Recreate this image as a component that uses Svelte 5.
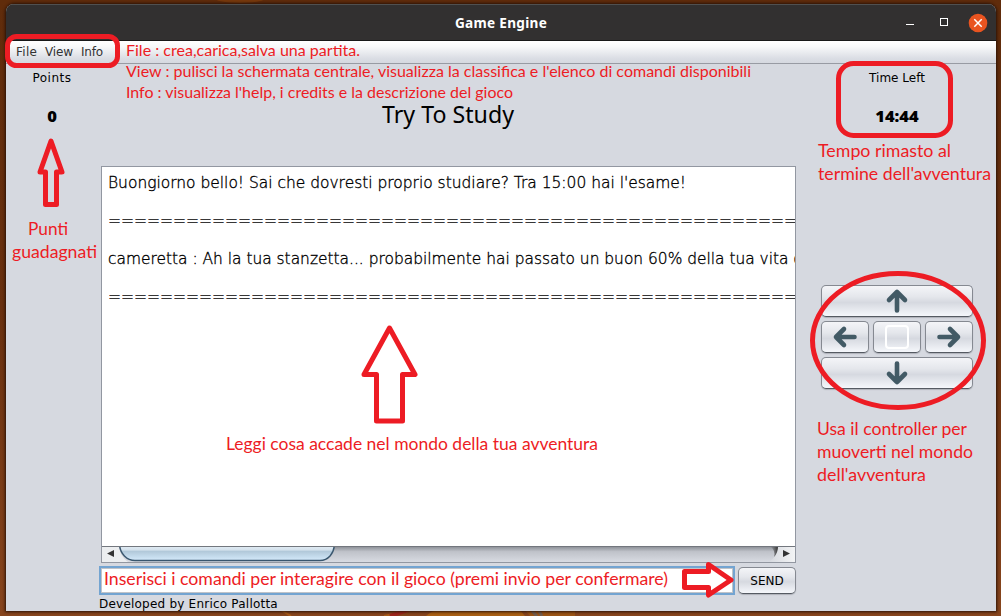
<script>
  const menus = [['File', 22], ['View', 29], ['Info', 23]];
  const rule = '='.repeat(70);
  const lines = [
    { text: "Buongiorno bello! Sai che dovresti proprio studiare? Tra 15:00 hai l'esame!", w: 578 },
    { text: rule, w: 910 },
    { text: 'cameretta : Ah la tua stanzetta... probabilmente hai passato un buon 60% della tua vita chiuso qui', w: 764 },
    { text: rule, w: 910 }
  ];
  const notes = [
    { x: 126, y: 56, w: 234, s: 16, t: 'File : crea,carica,salva una partita.' },
    { x: 126, y: 77, w: 625, s: 16, t: "View : pulisci la schermata centrale, visualizza la classifica e l'elenco di comandi disponibili" },
    { x: 126, y: 98, w: 387, s: 16, t: "Info : visualizza l'help, i credits e la descrizione del gioco" },
    { x: 818, y: 157, w: 133, s: 17.5, t: 'Tempo rimasto al' },
    { x: 818, y: 180, w: 173, s: 17.5, t: "termine dell'avventura" },
    { x: 28, y: 235, w: 40, s: 17.5, t: 'Punti' },
    { x: 12, y: 258, w: 85, s: 17.5, t: 'guadagnati' },
    { x: 226, y: 450, w: 372, s: 17.5, t: 'Leggi cosa accade nel mondo della tua avventura' },
    { x: 817, y: 435, w: 150, s: 17.5, t: 'Usa il controller per' },
    { x: 817, y: 458, w: 156, s: 17.5, t: 'muoverti nel mondo' },
    { x: 817, y: 481, w: 109, s: 17.5, t: "dell'avventura" },
    { x: 104, y: 585, w: 564, s: 17.5, t: 'Inserisci i comandi per interagire con il gioco (premi invio per confermare)' }
  ];
</script>

{#snippet arrow(turn)}
  <svg class="arrow" width="26" height="26" viewBox="-13 -13 26 26">
    <path transform={`rotate(${turn})`} d="M0 9.500V-9M-8 -1L0 -9L8 -1" />
  </svg>
{/snippet}

<div class="desktop">
  <svg class="wallpaper" width="1001" height="616">
    <ellipse cx="240" cy="-3" rx="27" ry="6" fill="#783a0d" />
    <path d="M281 610l10 6M384 616l24-5" stroke="#a85b17" stroke-width="2" />
    <path d="M426 616q6-6 14-6h80l5 6z" fill="#a95f13" />
    <path d="M525 610h50v6h-45z" fill="#9b5415" />
    <path d="M532 611l5 5m2-5l3 5" stroke="#745d4d" stroke-width="3" />
    <path d="M390 616l18-6" stroke="#9d251b" stroke-width="4" />
  </svg>
  <div class="window">
    <header>
      <span></span>
      <h1>Game Engine</h1>
      <div class="controls">
        <i class="min"></i><i class="max"></i>
        <svg width="20" height="20" viewBox="0 0 20 20"><circle cx="10" cy="10" r="9.300" fill="#e95420" /><path d="M6.300 6.300l7.400 7.400m0-7.400l-7.400 7.400" stroke="#fff" stroke-width="1.500" /></svg>
      </div>
    </header>
    <nav>{#each menus as [name, w]}<svg width={w} height="21"><text y="15" textLength={w - 1}>{name}</text></svg>{/each}</nav>
    <main>
      <aside class="left">
        <span class="label points">Points</span>
        <b>0</b>
      </aside>
      <section>
        <svg class="title" width="134" height="40"><text x="1" y="22" textLength="132" lengthAdjust="spacingAndGlyphs">Try To Study</text></svg>
        <div class="log">
          <div class="text">
            {#each lines as l}
              <svg width={l.w + 4} height="38"><text x="0" y="16" textLength={l.w} lengthAdjust="spacingAndGlyphs">{l.text}</text></svg>
            {/each}
          </div>
          <div class="scroll">
            <svg width="693" height="16" viewBox="0 0 693 16">
              <defs>
                <linearGradient id="track" x2="0" y2="1"><stop stop-color="#858990" /><stop offset=".35" stop-color="#bfc2c9" /><stop offset="1" stop-color="#d8dbe2" /></linearGradient>
                <linearGradient id="thumb" x2="0" y2="1"><stop stop-color="#eaf2f8" /><stop offset=".38" stop-color="#d3e1ec" /><stop offset=".42" stop-color="#b0c7d8" /><stop offset="1" stop-color="#d4eafb" /></linearGradient>
                <linearGradient id="cap"><stop stop-color="#d6d9df" /><stop offset="1" stop-color="#f3f4f5" /></linearGradient>
                <linearGradient id="shade"><stop stop-color="#444" stop-opacity="0" /><stop offset="1" stop-color="#333" /></linearGradient>
              </defs>
              <rect width="693" height="16" fill="url(#track)" />
              <path d="M0 0H17Q18 10 26 16H0Z" fill="#eceef0" />
              <path d="M693 0H676Q675 11 667 16H693Z" fill="url(#cap)" />
              <path d="M668 0H676Q676 7 672 11Q674 5 668 0Z" fill="url(#shade)" />
              <path d="M17.500 -2C18 8 25 14.500 33 14.500H218C226 14.500 232 8 232.500 -2Z" fill="url(#thumb)" stroke="#39566e" stroke-width="1.400" />
              <path d="M0 .5H693" stroke="#73777e" />
              <path d="M5 7.500l7-3.500v7zM688 7.500l-7-3.500v7z" fill="#333" />
            </svg>
          </div>
        </div>
        <div class="entry">
          <div class="field"></div>
          <button class="send">SEND</button>
        </div>
        <footer>Developed by Enrico Pallotta</footer>
      </section>
      <aside class="right">
        <span class="label">Time Left</span>
        <b>14:44</b>
        <div class="pad">
          <button class="wide">{@render arrow(0)}</button>
          <button>{@render arrow(-90)}</button>
          <button><i class="stop"></i></button>
          <button>{@render arrow(90)}</button>
          <button class="wide">{@render arrow(180)}</button>
        </div>
      </aside>
    </main>
  </div>

  <svg class="notes" width="1001" height="616">
    <g fill="none" stroke="#ed1c24" stroke-width="5" stroke-linejoin="round">
      <rect x="7.500" y="36.500" width="110" height="29" rx="9" />
      <rect x="838.500" y="63.500" width="112" height="72" rx="15" />
      <ellipse cx="898" cy="340.500" rx="85.500" ry="67" />
      <path d="M51 141L62 172H56.500V204.500H45.500V172H40Z" />
      <path d="M389.500 328L415 374.500H402.500V421H376.500V374.500H364Z" />
      <path d="M684.500 571.500H708.500V564.500L731 580L708.500 595V587.500H684.500Z" />
    </g>
    {#each notes as n}
      <text x={n.x} y={n.y} font-size={n.s} textLength={n.w} lengthAdjust="spacingAndGlyphs">{n.t}</text>
    {/each}
  </svg>
</div>

<style>
  .desktop { position: relative; width: 1001px; height: 616px; box-sizing: border-box; padding: 4px 5px 5px 6px; overflow: hidden; background: linear-gradient(#602c0b, #69300f 50%, #87451d); font-family: "DejaVu Sans", sans-serif; }
  .wallpaper, .notes { position: absolute; left: 0; top: 0; }
  .notes { pointer-events: none; }
  .notes text { font-family: Lato, sans-serif; fill: #ed1c24; }
  .window { position: relative; display: flex; flex-direction: column; width: 990px; height: 607px; border-radius: 8px 8px 0 0; overflow: hidden; background: #d6d9e0; box-shadow: 0 0 3px 1px #2b1206; }
  header { display: grid; grid-template-columns: 1fr auto 1fr; align-items: center; height: 37px; box-sizing: border-box; background: #323030; border-top: 1px solid #505050; border-bottom: 1px solid #181818; }
  h1 { margin: 0; color: #fff; font: bold 13.6px "Noto Sans", sans-serif; letter-spacing: .3px; }
  .controls { display: flex; justify-content: flex-end; align-items: center; padding-right: 8px; }
  .min { width: 8px; height: 1px; background: #fff; margin: 4px 26px 0 0; }
  .max { width: 6px; height: 6px; border: 1px solid #fff; margin: 0 20px 1px 0; }
  nav { display: flex; gap: 7px; height: 22px; flex: none; padding-left: 10px; font-size: 12px; border-bottom: 1px solid #989ba3; background: linear-gradient(#fff, #f8f9fa 25%, #dadde4 80%, #d6d9e0); }
  nav svg { overflow: visible; fill: #333; }
  main { display: grid; grid-template-columns: 92px 698px 200px; flex: 1; min-height: 0; }
  aside { display: flex; flex-direction: column; align-items: center; padding-top: 6px; }
  .right { padding-left: 2px; }
  .label { font-size: 12px; line-height: 16px; }
  .points { letter-spacing: .5px; }
  b { margin-top: 18px; font: 800 16.5px/24px "Open Sans", "Noto Sans", sans-serif; }
  section { display: flex; flex-direction: column; min-width: 0; }
  .title { align-self: center; margin: 37px 0 0 2px; overflow: visible; font: 23.5px "Noto Sans", sans-serif; }
  .log { display: flex; flex-direction: column; width: 693px; height: 395px; margin: 25px 0 0 3px; border: 1px solid #9297a1; background: #fff; }
  .text { flex: 1; padding: 5px 0 0 6px; overflow: hidden; }
  .text svg { display: block; overflow: visible; font: 200 16px "DejaVu Sans", sans-serif; stroke: #000; stroke-width: .35px; }
  .scroll { height: 16px; }
  .scroll svg { display: block; }
  .entry { display: flex; gap: 3px; margin: 3px 0 0 1px; height: 29px; flex: none; }
  .field { width: 636px; box-sizing: border-box; border: 2px solid #73a4d1; box-shadow: inset 0 0 0 1px #c0c3c8; background: #fff; }
  button { display: grid; place-items: center; padding: 0; box-sizing: border-box; border: 1px solid #858991; border-bottom-color: #555a62; border-radius: 5px; background: linear-gradient(#f4f5f8, #e5e7ec 35%, #d6d9e0 55%, #f5f7fb); font: 12px "DejaVu Sans", sans-serif; box-shadow: 0 1px 1px #aeb1b9; }
  .send { width: 58px; height: 27px; margin-top: 1px; }
  footer { margin: 1px 0 0 1px; font-size: 12px; line-height: 17px; letter-spacing: .22px; }
  .pad { display: grid; grid-template-columns: 48px 48px 48px; grid-auto-rows: 32px; gap: 4px; margin: 157px 1px 0 0; }
  .wide { grid-column: span 3; }
  .arrow path { fill: none; stroke: #425a65; stroke-width: 4.6; stroke-linecap: round; stroke-linejoin: round; }
  .stop { width: 20px; height: 20px; border: 2px solid #fff; border-radius: 4px; }
</style>
